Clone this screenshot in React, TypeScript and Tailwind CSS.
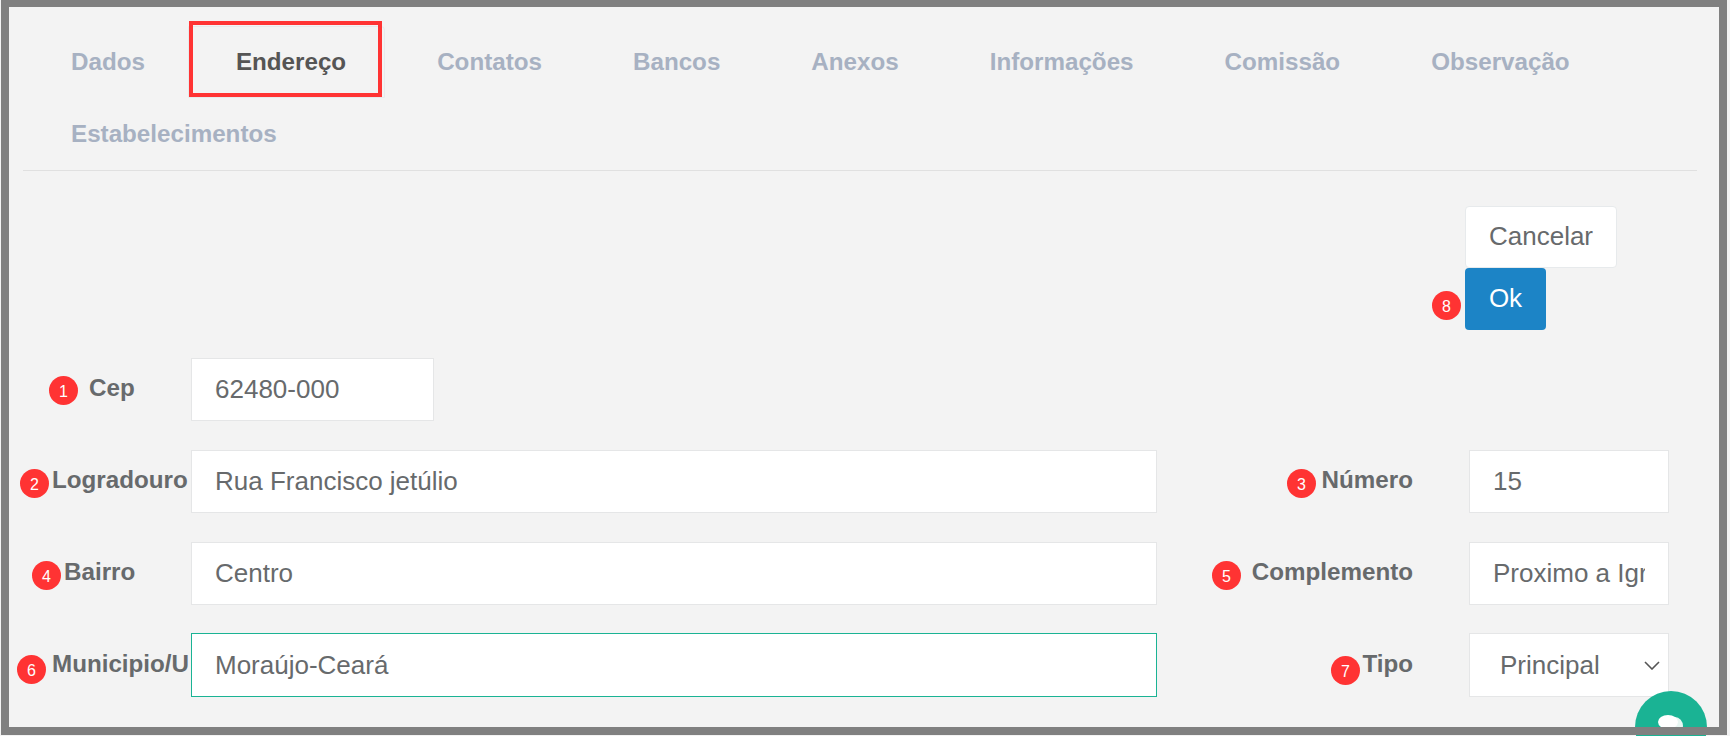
import React from 'react';

const tabs = ['Dados', 'Endereço', 'Contatos', 'Bancos', 'Anexos', 'Informações', 'Comissão', 'Observação', 'Estabelecimentos'];

// Bolinha vermelha numerada usada nas anotações do print
const Badge = ({ n, className }: { n: number; className: string }) => (
  <span className={`absolute flex h-[29px] w-[29px] items-center justify-center rounded-full bg-[#ff3333] pt-[2px] text-[16px] font-normal leading-none text-white ${className}`}>
    {n}
  </span>
);

const inputClass =
  'h-full w-full border border-[#e5e6e7] bg-white px-[23px] text-[26px] text-[#676a6c] outline-none';

const labelClass = 'relative h-full shrink-0 pt-[12px] text-[24.2px] font-bold leading-[36px] text-[#676a6c] whitespace-nowrap';

const App = () => {
  return (
    <div className="relative h-[736px] w-[1730px] overflow-hidden bg-[#f3f3f3] font-['Liberation_Sans',sans-serif]">
      <div className="flex flex-col pl-[23px] pr-[33px] pt-[26px]">
        {/* Abas */}
        <div className="flex flex-wrap border-b border-[#e0e0e0]">
          {tabs.map((tab) => {
            const active = tab === 'Endereço';
            return (
              <div
                key={tab}
                className={`relative mr-[4px] flex h-[72px] items-center border pl-[47px] pr-[38px] text-[24.2px] font-bold ${
                  active ? 'rounded-tr-[4px] border-[#e7eaec] text-[#555555]' : 'border-transparent text-[#a7b1c2]'
                }`}
              >
                {tab}
                {active && <div className="absolute left-0 top-[-6px] h-[76px] w-[193px] border-[4px] border-[#ff3333]" />}
              </div>
            );
          })}
        </div>

        {/* Botões */}
        <div className="mr-[80px] mt-[35px] flex w-[152px] flex-col items-start self-end">
          <button className="h-[62px] w-[152px] rounded-[4px] border border-[#e7eaec] bg-white pb-[2px] text-[26px] text-[#676a6c]">
            Cancelar
          </button>
          <button className="relative h-[62px] w-[81px] rounded-[4px] bg-[#1c84c6] pb-[2px] text-[26px] text-white">
            Ok
            <Badge n={8} className="left-[-33px] top-[23px]" />
          </button>
        </div>

        {/* Formulário */}
        <div className="mt-[28px] flex flex-col gap-[29px] pl-px">
          <div className="flex h-[63px]">
            <div className={`${labelClass} w-[167px] pl-[65px]`}>
              Cep
              <Badge n={1} className="left-[25px] top-[18px]" />
            </div>
            <div className="w-[243px]">
              <input readOnly value="62480-000" className={inputClass} />
            </div>
          </div>

          <div className="flex h-[63px]">
            <div className={`${labelClass} w-[167px] pl-[28px]`}>
              Logradouro
              <Badge n={2} className="left-[-4px] top-[19px]" />
            </div>
            <div className="w-[966px]">
              <input readOnly value="Rua Francisco jetúlio" className={inputClass} />
            </div>
            <div className={`${labelClass} w-[312px] pr-[56px] text-right`}>
              Número
              <Badge n={3} className="left-[130px] top-[19px]" />
            </div>
            <div className="w-[200px]">
              <input readOnly value="15" className={inputClass} />
            </div>
          </div>

          <div className="flex h-[63px]">
            <div className={`${labelClass} w-[167px] pl-[40px]`}>
              Bairro
              <Badge n={4} className="left-[8px] top-[19px]" />
            </div>
            <div className="w-[966px]">
              <input readOnly value="Centro" className={inputClass} />
            </div>
            <div className={`${labelClass} w-[312px] pr-[56px] text-right`}>
              Complemento
              <Badge n={5} className="left-[55px] top-[19px]" />
            </div>
            <div className="w-[200px]">
              <input readOnly value="Proximo a Igreja" className={inputClass} />
            </div>
          </div>

          <div className="-mt-px flex h-[64px]">
            <div className={`${labelClass} w-[167px] pl-[28px] !pt-[13px]`}>
              Municipio/U
              <Badge n={6} className="left-[-7px] top-[22px]" />
            </div>
            <div className="w-[966px]">
              <input readOnly value="Moraújo-Ceará" className={`${inputClass} !border-[#1ab394]`} />
            </div>
            <div className={`${labelClass} w-[312px] pr-[56px] text-right !pt-[13px]`}>
              Tipo
              <Badge n={7} className="left-[174px] top-[23px]" />
            </div>
            <div className="relative w-[200px]">
              <select defaultValue="Principal" className="h-full w-full appearance-none border border-[#e5e6e7] bg-white pl-[30px] text-[26px] text-[#676a6c] outline-none">
                <option>Principal</option>
              </select>
              <svg viewBox="0 0 16 9" className="pointer-events-none absolute left-[175px] top-[28px] h-[9px] w-[16px]" fill="none" stroke="#555555" strokeWidth="1.6">
                <path d="M1 1l7 7 7-7" />
              </svg>
            </div>
          </div>
        </div>
      </div>

      {/* Botão flutuante de chat */}
      <div className="absolute left-[1635px] top-[691px] h-[72px] w-[72px] rounded-full bg-[#1ab394]">
        <svg viewBox="0 0 72 72" className="h-full w-full">
          <ellipse cx="40" cy="35" rx="8" ry="9" fill="#e8f7f3" />
          <ellipse cx="33" cy="31" rx="10" ry="7" fill="#ffffff" />
        </svg>
      </div>

      {/* Moldura cinza do print */}
      <div className="pointer-events-none absolute left-px top-0 h-[735px] w-[1726px] border-x-[8px] border-b-[8px] border-t-[7px] border-[#808080]" />
    </div>
  );
};

export default App;
